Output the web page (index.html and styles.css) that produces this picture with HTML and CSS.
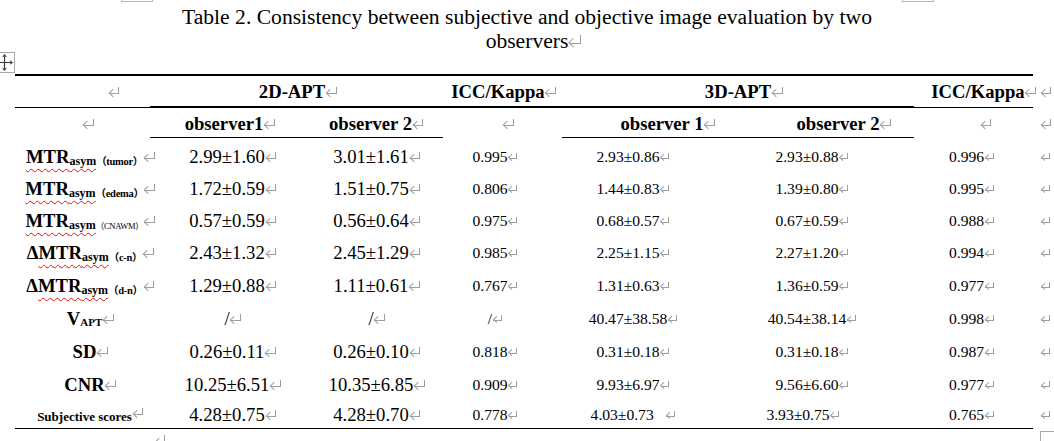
FILE: index.html
```html
<!DOCTYPE html>
<html lang="en">
<head>
<meta charset="utf-8">
<title>Table 2</title>
<link rel="stylesheet" href="styles.css">
</head>
<body>
<div class="page">
  <span class="corner corner-l"></span>
  <span class="corner corner-r"></span>

  <h1 class="title">Table 2. Consistency between subjective and objective image evaluation by two<br>observers<i class="pm"></i></h1>

  <div class="handle">
    <svg width="19" height="19" viewBox="0 0 19 19" aria-hidden="true">
      <path d="M9.5 3.5V15.5M3.5 9.5H15.5" stroke="#3a3a3a" stroke-width="1.2" fill="none"/>
      <path d="M9.5 1L7.3 3.8H11.7Z M9.5 18L7.3 15.2H11.7Z M1 9.5L3.8 7.3V11.7Z M18 9.5L15.2 7.3V11.7Z" fill="#3a3a3a"/>
    </svg>
  </div>

  <div class="table">
    <div class="row hd1">
      <div class="c h1a first-mark"><i class="pm"></i></div>
      <div class="c h1b rule-thick">2D-APT<i class="pm"></i></div>
      <div class="c h1c rule-thick">ICC/Kappa<i class="pm"></i></div>
      <div class="c h1d rule-thick">3D-APT<i class="pm"></i></div>
      <div class="c h1e rule-thin shift-icc">ICC/Kappa<i class="pm"></i></div>
      <div class="c end"><i class="pm"></i></div>
    </div>

    <div class="row hd2">
      <div class="c h2a"><i class="pm"></i></div>
      <div class="c h2b rule-thin">observer1<i class="pm"></i></div>
      <div class="c h2c rule-thin">observer 2<i class="pm"></i></div>
      <div class="c h2d"><i class="pm"></i></div>
      <div class="c h2e rule-thin">observer 1<i class="pm"></i></div>
      <div class="c h2f rule-thin">observer 2<i class="pm"></i></div>
      <div class="c h2g shift-mark"><i class="pm"></i></div>
      <div class="c end"><i class="pm"></i></div>
    </div>

    <div class="tbody">
      <div class="row r32">
        <div class="c da lab"><span class="sp">MTR<span class="sub">asym</span></span><span class="par">（tumor）</span><i class="pm"></i></div>
        <div class="c db v2">2.99±1.60<i class="pm"></i></div>
        <div class="c dc v2">3.01±1.61<i class="pm"></i></div>
        <div class="c dd v3">0.995<i class="pm"></i></div>
        <div class="c de v3">2.93±0.86<i class="pm"></i></div>
        <div class="c df v3">2.93±0.88<i class="pm"></i></div>
        <div class="c dg v3">0.996<i class="pm"></i></div>
        <div class="c end v3"><i class="pm"></i></div>
      </div>
      <div class="row r32">
        <div class="c da lab"><span class="sp">MTR<span class="sub">asym</span></span><span class="par">（edema）</span><i class="pm"></i></div>
        <div class="c db v2">1.72±0.59<i class="pm"></i></div>
        <div class="c dc v2">1.51±0.75<i class="pm"></i></div>
        <div class="c dd v3">0.806<i class="pm"></i></div>
        <div class="c de v3">1.44±0.83<i class="pm"></i></div>
        <div class="c df v3">1.39±0.80<i class="pm"></i></div>
        <div class="c dg v3">0.995<i class="pm"></i></div>
        <div class="c end v3"><i class="pm"></i></div>
      </div>
      <div class="row r32">
        <div class="c da lab"><span class="sp">MTR<span class="sub">asym</span></span><span class="par par-light">（CNAWM）</span><i class="pm"></i></div>
        <div class="c db v2">0.57±0.59<i class="pm"></i></div>
        <div class="c dc v2">0.56±0.64<i class="pm"></i></div>
        <div class="c dd v3">0.975<i class="pm"></i></div>
        <div class="c de v3">0.68±0.57<i class="pm"></i></div>
        <div class="c df v3">0.67±0.59<i class="pm"></i></div>
        <div class="c dg v3">0.988<i class="pm"></i></div>
        <div class="c end v3"><i class="pm"></i></div>
      </div>
      <div class="row r32">
        <div class="c da lab">Δ<span class="sp">MTR<span class="sub">asym</span></span><span class="par">（c-n）</span><i class="pm"></i></div>
        <div class="c db v2">2.43±1.32<i class="pm"></i></div>
        <div class="c dc v2">2.45±1.29<i class="pm"></i></div>
        <div class="c dd v3">0.985<i class="pm"></i></div>
        <div class="c de v3">2.25±1.15<i class="pm"></i></div>
        <div class="c df v3">2.27±1.20<i class="pm"></i></div>
        <div class="c dg v3">0.994<i class="pm"></i></div>
        <div class="c end v3"><i class="pm"></i></div>
      </div>
      <div class="row r33">
        <div class="c da lab">Δ<span class="sp">MTR<span class="sub">asym</span></span><span class="par">（d-n）</span><i class="pm"></i></div>
        <div class="c db v2">1.29±0.88<i class="pm"></i></div>
        <div class="c dc v2">1.11±0.61<i class="pm"></i></div>
        <div class="c dd v3">0.767<i class="pm"></i></div>
        <div class="c de v3">1.31±0.63<i class="pm"></i></div>
        <div class="c df v3">1.36±0.59<i class="pm"></i></div>
        <div class="c dg v3">0.977<i class="pm"></i></div>
        <div class="c end v3"><i class="pm"></i></div>
      </div>
      <div class="row r34">
        <div class="c da lab">V<span class="apt">APT</span><i class="pm"></i></div>
        <div class="c db v2">/<i class="pm"></i></div>
        <div class="c dc v2">/<i class="pm"></i></div>
        <div class="c dd v3">/<i class="pm"></i></div>
        <div class="c de v3">40.47±38.58<i class="pm"></i></div>
        <div class="c df v3">40.54±38.14<i class="pm"></i></div>
        <div class="c dg v3">0.998<i class="pm"></i></div>
        <div class="c end v3"><i class="pm"></i></div>
      </div>
      <div class="row r32">
        <div class="c da lab">SD<i class="pm"></i></div>
        <div class="c db v2">0.26±0.11<i class="pm"></i></div>
        <div class="c dc v2">0.26±0.10<i class="pm"></i></div>
        <div class="c dd v3">0.818<i class="pm"></i></div>
        <div class="c de v3">0.31±0.18<i class="pm"></i></div>
        <div class="c df v3">0.31±0.18<i class="pm"></i></div>
        <div class="c dg v3">0.987<i class="pm"></i></div>
        <div class="c end v3"><i class="pm"></i></div>
      </div>
      <div class="row r33">
        <div class="c da lab">CNR<i class="pm"></i></div>
        <div class="c db v2">10.25±6.51<i class="pm"></i></div>
        <div class="c dc v2">10.35±6.85<i class="pm"></i></div>
        <div class="c dd v3">0.909<i class="pm"></i></div>
        <div class="c de v3">9.93±6.97<i class="pm"></i></div>
        <div class="c df v3">9.56±6.60<i class="pm"></i></div>
        <div class="c dg v3">0.977<i class="pm"></i></div>
        <div class="c end v3"><i class="pm"></i></div>
      </div>
      <div class="row r27">
        <div class="c da lab"><span class="small-lab">Subjective scores</span><i class="pm pm-up"></i></div>
        <div class="c db v2">4.28±0.75<i class="pm"></i></div>
        <div class="c dc v2">4.28±0.70<i class="pm"></i></div>
        <div class="c dd v3">0.778<i class="pm"></i></div>
        <div class="c de v3">4.03±0.73&nbsp;&nbsp;&nbsp;<i class="pm"></i></div>
        <div class="c df v3 nudge-left">3.93±0.75<i class="pm"></i></div>
        <div class="c dg v3">0.765<i class="pm"></i></div>
        <div class="c end v3"><i class="pm"></i></div>
      </div>
    </div>
  </div>

  <i class="pm after-mark"></i>
  <span class="resize"></span>
</div>
</body>
</html>
```

FILE: styles.css
```css
* { box-sizing: border-box; }

html, body {
  margin: 0;
  padding: 0;
  background: #fff;
}

.page {
  position: relative;
  width: 1054px;
  height: 441px;
  overflow: hidden;
  font-family: "Liberation Serif", "Noto Sans CJK SC", serif;
  color: #000;
}

/* Word page corner marks */
.corner {
  position: absolute;
  top: -20px;
  width: 32px;
  height: 22px;
  border: 1px solid #b4b4b4;
}
.corner-l { left: 121px; }
.corner-r { left: 902px; }

.title {
  margin: 0;
  padding-top: 5px;
  font-weight: 400;
  font-size: 21.6px;
  line-height: 24px;
  text-align: center;
}

/* table move handle */
.handle {
  position: absolute;
  left: -6px;
  top: 52px;
  width: 21px;
  height: 21px;
  border: 1px solid #a8a8a8;
  background: #fff;
}
.handle svg { display: block; }

/* paragraph marks */
.pm {
  display: inline-block;
  position: relative;
  width: 0.56em;
  height: 0.4em;
  margin-left: 1px;
  margin-right: calc(-0.56em - 1px);
  border-right: 1px solid #9e9e9e;
  border-bottom: 1px solid #9e9e9e;
  vertical-align: 0.2em;
  font-style: normal;
}
.pm::before {
  content: "";
  position: absolute;
  left: 0.04em;
  bottom: calc(-0.13em - 0.5px);
  width: 0.26em;
  height: 0.26em;
  border-left: 1px solid #9e9e9e;
  border-bottom: 1px solid #9e9e9e;
  transform: rotate(45deg);
}

.table {
  margin: 21px 0 0 15px;
  width: 1018px;
  border-top: 2px solid #000;
  border-bottom: 1px solid #000;
}

.row {
  display: flex;
}

.c {
  flex: none;
  text-align: center;
  white-space: nowrap;
}

.end {
  width: 0;
  padding-left: 7px;
  text-align: left;
}

/* header rows */
.hd1, .hd2 {
  font-weight: 700;
  font-size: 18.67px;
}
.hd1 .c { height: 32px; line-height: 32px; }
.hd2 .c { height: 30px; line-height: 32px; }

.rule-thick { border-bottom: 2px solid #000; }
.rule-thin  { border-bottom: 1px solid #000; }
.hd1 .h1a { border-bottom: 1px solid #000; }

.h1a { width: 135px; }
.h1b { width: 284px; }
.h1c { width: 128px; }
.h1d { width: 352px; }
.h1e { width: 119px; }

.first-mark { text-align: left; padding-left: 93px; }
.shift-icc { padding-left: 9px; }

.h2a { width: 135px; }
.h2b { width: 148px; }
.h2c { width: 145px; }
.h2d { width: 119px; }
.h2e { width: 200px; }
.h2f { width: 152px; }
.h2g { width: 119px; }
.shift-mark { padding-left: 13px; }

/* body rows */
.tbody { padding-top: 3px; }
.r32 .c { height: 32px; line-height: 32px; }
.r33 .c { height: 33px; line-height: 33px; }
.r34 .c { height: 34px; line-height: 34px; }
.r27 .c { height: 27px; line-height: 27px; }

.da { width: 135px; padding-left: 4px; }
.db { width: 154px; }
.dc { width: 134px; }
.dd { width: 104px; }
.de { width: 172px; }
.df { width: 186px; }
.dg { width: 133px; }

.v2 { font-size: 18.67px; }
.v3 { font-size: 15.6px; }

.lab {
  font-weight: 700;
  font-size: 18.67px;
}

.sp {
  text-decoration: underline wavy #e01010;
  text-decoration-thickness: 1px;
  text-underline-offset: 5px;
  text-decoration-skip-ink: none;
}

.sub {
  font-size: 12px;
  vertical-align: -2px;
}

.par {
  font-size: 10.5px;
  vertical-align: -2px;
  letter-spacing: -0.3px;
}
.par-light { font-weight: 400; font-size: 8.5px; }

.apt {
  font-size: 11px;
  vertical-align: -1px;
}

.small-lab {
  font-size: 13px;
}
.pm-up { vertical-align: 0.3em; }

.nudge-left { padding-right: 18px; }

.after-mark {
  position: absolute;
  left: 154px;
  top: 435px;
  font-size: 18.67px;
}

.resize {
  position: absolute;
  left: 1040px;
  top: 431px;
  width: 20px;
  height: 20px;
  border: 1px solid #a8a8a8;
}
```
